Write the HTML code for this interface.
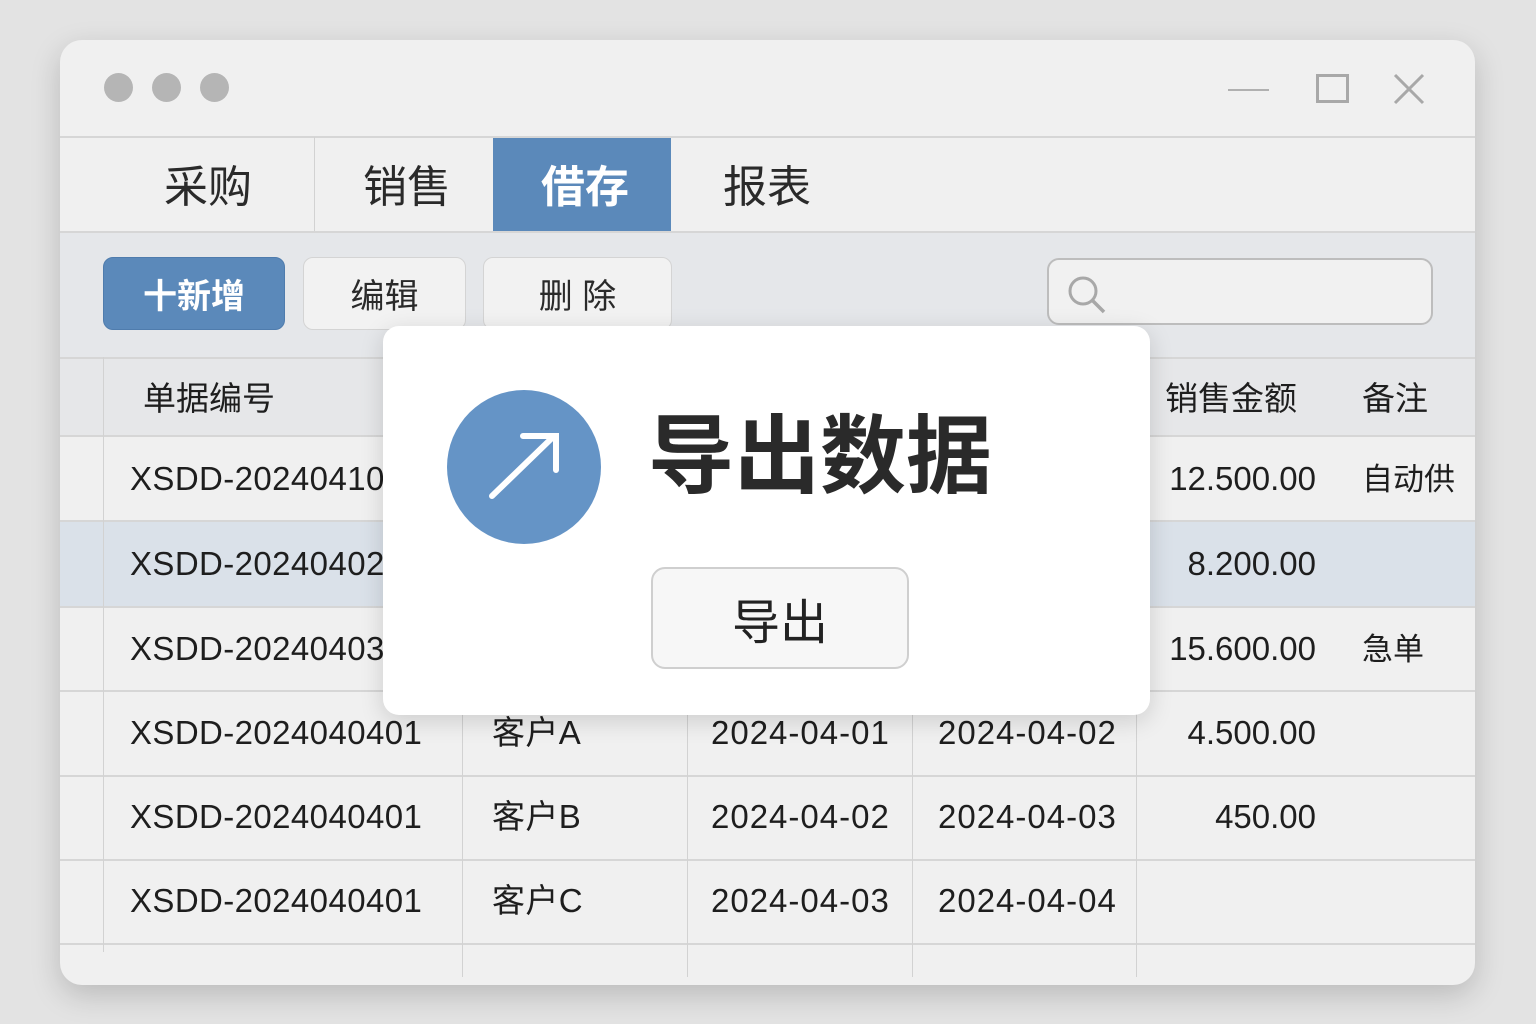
<!DOCTYPE html>
<html><head><meta charset="utf-8"><style>
*{margin:0;padding:0;box-sizing:border-box}
body{width:1536px;height:1024px;background:#e3e3e3;position:relative;overflow:hidden;font-family:"Liberation Sans","Noto Sans CJK SC",sans-serif;color:#222}
.a{position:absolute}
.win{left:60px;top:40px;width:1415px;height:945px;background:#f0f0f0;border-radius:22px;box-shadow:0 10px 30px rgba(0,0,0,.18);overflow:hidden}
.dot{width:29px;height:29px;border-radius:50%;background:#b5b5b5;top:73px}
.hl{height:2px;background:#d6d6d6;left:60px;width:1415px}
.vl{width:1px;background:#d2d2d2}
.tab{font-size:44px;top:160px;color:#2a2a2a;line-height:56px}
.btn{top:257px;height:73px;border-radius:10px;border:1px solid #d4d4d4;background:#f2f2f2;font-size:34px;display:flex;align-items:center;justify-content:center;color:#2a2a2a}
.cell{font-size:33px;color:#1e1e1e;line-height:40px;letter-spacing:.4px}
.cj{font-size:31px;letter-spacing:0}
</style></head><body>
<div class="a win"></div>
<div class="a dot" style="left:104px"></div>
<div class="a dot" style="left:152px"></div>
<div class="a dot" style="left:200px"></div>
<div class="a" style="left:1228px;top:89px;width:41px;height:2px;background:#b0b0b0"></div>
<div class="a" style="left:1316px;top:74px;width:33px;height:29px;border:3px solid #a8a8a8"></div>
<svg class="a" style="left:1392px;top:72px" width="34" height="34"><path d="M3 3L31 31M31 3L3 31" stroke="#a8a8a8" stroke-width="3"/></svg>
<div class="a hl" style="top:136px"></div>
<div class="a vl" style="left:314px;top:137px;height:94px"></div>
<div class="a" style="left:493px;top:138px;width:178px;height:93px;background:#5b89ba"></div>
<div class="a tab" style="left:164px">采购</div>
<div class="a tab" style="left:363px">销售</div>
<div class="a tab" style="left:541px;color:#fff;font-weight:bold">借存</div>
<div class="a tab" style="left:723px">报表</div>
<div class="a" style="left:60px;top:231px;width:1415px;height:126px;background:#e5e7ea;border-top:2px solid #d6d6d6"></div>
<div class="a btn" style="left:103px;width:182px;background:#5b89ba;border-color:#4f7cad;color:#fff;font-weight:bold">十新增</div>
<div class="a btn" style="left:303px;width:163px">编辑</div>
<div class="a btn" style="left:483px;width:189px">删 除</div>
<div class="a" style="left:1047px;top:258px;width:386px;height:67px;border:2px solid #bdbdbd;border-radius:12px;background:#f1f1f1"></div>
<svg class="a" style="left:1064px;top:272px" width="44" height="44"><circle cx="19" cy="19" r="13" fill="none" stroke="#a8a8a8" stroke-width="3"/><path d="M28 28L40 40" stroke="#a8a8a8" stroke-width="3.5"/></svg>
<div class="a" style="left:60px;top:357px;width:1415px;height:79px;background:#e6e7e9;border-top:2px solid #d6d6d6"></div>
<div class="a" style="left:60px;top:521px;width:1415px;height:86px;background:#dae1e9"></div>
<div class="a hl" style="top:435px"></div>
<div class="a hl" style="top:520px"></div>
<div class="a hl" style="top:606px"></div>
<div class="a hl" style="top:690px"></div>
<div class="a hl" style="top:775px"></div>
<div class="a hl" style="top:859px"></div>
<div class="a hl" style="top:943px"></div>
<div class="a vl" style="left:103px;top:357px;height:595px"></div>
<div class="a vl" style="left:462px;top:357px;height:620px"></div>
<div class="a vl" style="left:687px;top:357px;height:620px"></div>
<div class="a vl" style="left:912px;top:357px;height:620px"></div>
<div class="a vl" style="left:1136px;top:357px;height:620px"></div>
<div class="a cell cj" style="left:143px;top:379px;font-size:33px">单据编号</div>
<div class="a cell cj" style="left:1165px;top:379px;font-size:33px">销售金额</div>
<div class="a cell cj" style="left:1362px;top:379px;font-size:33px">备注</div>
<div class="a cell" style="left:130px;top:459px">XSDD-20240410</div>
<div class="a cell" style="left:130px;top:544px">XSDD-20240402</div>
<div class="a cell" style="left:130px;top:629px">XSDD-20240403</div>
<div class="a cell" style="left:130px;top:713px">XSDD-2024040401</div>
<div class="a cell" style="left:130px;top:797px">XSDD-2024040401</div>
<div class="a cell" style="left:130px;top:881px">XSDD-2024040401</div>
<div class="a cell" style="left:492px;top:713px">客户A</div>
<div class="a cell" style="left:492px;top:797px">客户B</div>
<div class="a cell" style="left:492px;top:881px">客户C</div>
<div class="a cell" style="left:711px;top:713px;letter-spacing:1px">2024-04-01</div>
<div class="a cell" style="left:711px;top:797px;letter-spacing:1px">2024-04-02</div>
<div class="a cell" style="left:711px;top:881px;letter-spacing:1px">2024-04-03</div>
<div class="a cell" style="left:938px;top:713px;letter-spacing:1px">2024-04-02</div>
<div class="a cell" style="left:938px;top:797px;letter-spacing:1px">2024-04-03</div>
<div class="a cell" style="left:938px;top:881px;letter-spacing:1px">2024-04-04</div>
<div class="a cell" style="right:220px;top:459px;letter-spacing:0">12.500.00</div>
<div class="a cell" style="right:220px;top:544px;letter-spacing:0">8.200.00</div>
<div class="a cell" style="right:220px;top:629px;letter-spacing:0">15.600.00</div>
<div class="a cell" style="right:220px;top:713px;letter-spacing:0">4.500.00</div>
<div class="a cell" style="right:220px;top:797px;letter-spacing:0">450.00</div>
<div class="a cell cj" style="left:1362px;top:460px">自动供</div>
<div class="a cell cj" style="left:1362px;top:630px">急单</div>
<div class="a" style="left:383px;top:326px;width:767px;height:389px;background:#fff;border-radius:16px;box-shadow:0 6px 24px rgba(0,0,0,.15)"></div>
<svg class="a" style="left:446px;top:390px" width="156" height="156"><circle cx="78" cy="77" r="77" fill="#6594c6"/><path d="M46 106L107 47M77 46H110V80" fill="none" stroke="#fff" stroke-width="6" stroke-linecap="round"/></svg>
<div class="a" style="left:648px;top:407px;font-size:86px;font-weight:bold;color:#2a2a2a;line-height:100px">导出数据</div>
<div class="a" style="left:651px;top:567px;width:258px;height:102px;border:2px solid #cfcfcf;border-radius:14px;background:#f7f7f7;display:flex;align-items:center;justify-content:center;font-size:48px;color:#222">导出</div>
</body></html>
